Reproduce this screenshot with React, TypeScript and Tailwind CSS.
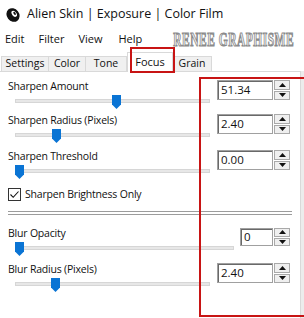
import React from "react";

const RED = "border-[#c81414]";

interface GroupProps {
  label: string;
  value: string;
  thumb: number;
  narrow?: boolean;
}

const AlienLogo = () => (
  <svg width="16" height="16" viewBox="0 0 16 16">
    <ellipse cx="8" cy="8" rx="6.2" ry="7.2" transform="rotate(-38 8 8)" fill="#111" />
    <ellipse cx="9.2" cy="6.8" rx="2.2" ry="3.4" transform="rotate(-38 9.2 6.8)" fill="#fff" />
    <ellipse cx="9.6" cy="6.4" rx="1" ry="1.7" transform="rotate(-38 9.6 6.4)" fill="#111" />
  </svg>
);

const Thumb = () => (
  <svg width="9" height="14" viewBox="0 0 9 14">
    <polygon points="0,0 9,0 9,9.5 4.5,14 0,9.5" fill="#0a74d4" />
  </svg>
);

const Slider = ({ thumb, narrow }: { thumb: number; narrow?: boolean }) => (
  <div className={`relative h-[16px] ml-[7px] ${narrow ? "w-[219px]" : "w-[195px]"}`}>
    <div className="mt-[5px] h-[4px] bg-[#e7e7e7] border border-[#d6d6d6]" />
    <div className="absolute top-[1px]" style={{ left: thumb - 15 }}>
      <Thumb />
    </div>
  </div>
);

const Arrow = ({ up }: { up?: boolean }) => (
  <svg width="7" height="4" viewBox="0 0 7 4">
    <polygon points={up ? "0,4 3.5,0 7,4" : "0,0 7,0 3.5,4"} fill="#111" />
  </svg>
);

const Spin = ({ value, narrow }: { value: string; narrow?: boolean }) => (
  <div className={`flex gap-[1px] ${narrow ? "h-[18px]" : "h-[20px]"}`}>
    <div
      className={`${narrow ? "w-[33px]" : "w-[56px]"} h-full bg-white border border-[#a0a0a0] shadow-[inset_1px_1px_0_#696969] pl-[3px] text-[11.5px] text-[#111] flex items-center`}
    >
      {value}
    </div>
    <div className="flex flex-col gap-[1px] w-[16px] h-full">
      <div className="flex-1 bg-[#efefef] border border-[#a9a9a9] flex items-center justify-center">
        <Arrow up />
      </div>
      <div className="flex-1 bg-[#efefef] border border-[#a9a9a9] flex items-center justify-center">
        <Arrow />
      </div>
    </div>
  </div>
);

const Group = ({ label, value, thumb, narrow }: GroupProps) => (
  <div className="flex justify-between h-[36px]">
    <div className="flex flex-col">
      <div className="h-[16px] leading-[16px] tracking-[-0.2px]">{label}</div>
      <Slider thumb={thumb} narrow={narrow} />
    </div>
    <div className={narrow ? "mt-[3px]" : "mt-[2px]"}>
      <Spin value={value} narrow={narrow} />
    </div>
  </div>
);

const tabs = [
  { name: "Settings", w: "w-[48px]" },
  { name: "Color", w: "w-[38px]" },
  { name: "Tone", w: "w-[42px]" },
  { name: "Focus", w: "w-[46px]", active: true },
  { name: "Grain", w: "w-[40px]" },
];

export default function App() {
  return (
    <div className="relative w-[304px] h-[318px] overflow-hidden bg-white text-[10.5px] text-[#111] font-['Open_Sans',sans-serif]">
      {/* title */}
      <div className="h-[29px] flex items-center pl-[5px] gap-[6px] text-[12.5px]">
        <AlienLogo />
        <span>Alien Skin | Exposure | Color Film</span>
      </div>

      {/* menu */}
      <div className="h-[21px] flex items-center pl-[5px] text-[11px]">
        <span>Edit</span>
        <span className="ml-[14px]">Filter</span>
        <span className="ml-[14px]">View</span>
        <span className="ml-[16px]">Help</span>
        <span className="ml-[31px] inline-block scale-y-[1.55] font-['Liberation_Serif',serif] text-[11.5px] leading-[14px] font-bold tracking-[0.5px] text-[#f4f4f4] [-webkit-text-stroke:0.7px_#8a8a8a] whitespace-nowrap">
          RENEE GRAPHISME
        </span>
      </div>

      {/* tabs */}
      <div className="h-[21px] flex items-end pl-[1px]">
        {tabs.map((t) =>
          t.active ? (
            <div
              key={t.name}
              className={`${t.w} h-[20px] -mb-[1px] bg-white border border-b-0 border-[#d9d9d9] flex items-center justify-center relative z-10 text-[11px]`}
            >
              {t.name}
            </div>
          ) : (
            <div
              key={t.name}
              className={`${t.w} h-[15px] bg-[#f0f0f0] border border-b-0 border-[#d9d9d9] flex items-center justify-center -ml-[1px] first:ml-0`}
            >
              {t.name}
            </div>
          )
        )}
      </div>

      {/* panel */}
      <div className="flex h-[247px]">
        <div className="w-[301px] border-t border-r border-[#d9d9d9] bg-white pl-[8px] pr-[10px] pt-[6px]">
          <div className="h-[34px]">
            <Group label="Sharpen Amount" value="51.34" thumb={112} />
          </div>
          <Group label="Sharpen Radius (Pixels)" value="2.40" thumb={52} />
          <div className="h-[40px]">
            <Group label="Sharpen Threshold" value="0.00" thumb={15} />
          </div>
          <div className="flex items-center gap-[4px] h-[13px]">
            <div className="w-[13px] h-[13px] border border-[#333] bg-white flex items-center justify-center">
              <svg width="11" height="11" viewBox="0 0 11 11">
                <polyline points="1.5,5.5 4.2,8.3 9.5,2.5" fill="none" stroke="#111" strokeWidth="1.1" />
              </svg>
            </div>
            <span className="tracking-[-0.2px]">Sharpen Brightness Only</span>
          </div>
          <div className="mt-[10px] mr-[-2px] h-[4px] border-t border-b border-[#9c9c9c] bg-white" />
          <div className="mt-[10px]">
            <Group label="Blur Opacity" value="0" thumb={15} narrow />
          </div>
          <Group label="Blur Radius (Pixels)" value="2.40" thumb={51} />
        </div>
        <div className="flex-1 bg-[#ececec]" />
      </div>

      {/* red annotations */}
      <div className={`absolute left-[130px] top-[47px] w-[45px] h-[26px] border-2 ${RED} z-20`} />
      <div className={`absolute left-[199px] top-[77px] w-[120px] h-[240px] border-2 ${RED} z-20`} />
    </div>
  );
}
